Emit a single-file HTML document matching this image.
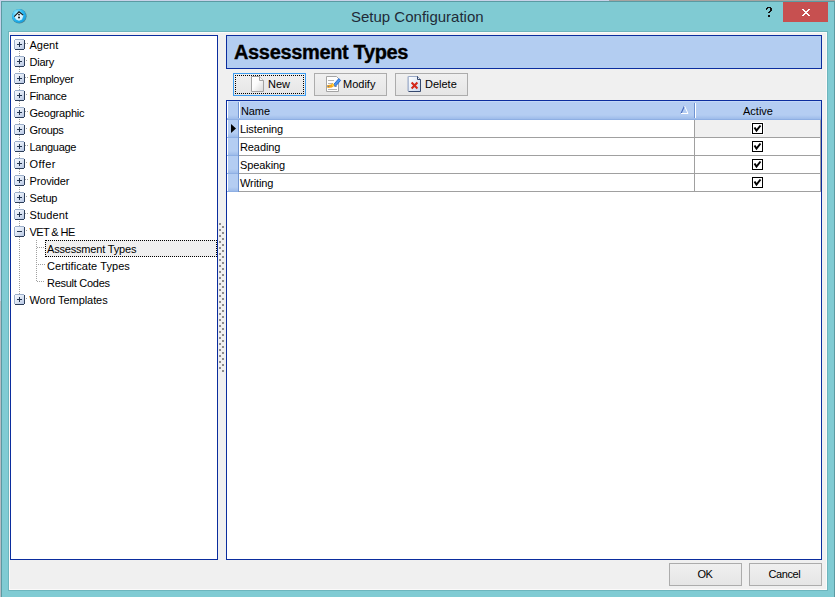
<!DOCTYPE html><html><head><meta charset="utf-8"><style>
*{margin:0;padding:0;box-sizing:border-box}
html,body{width:835px;height:597px;overflow:hidden;position:relative;background:#dde3ec;font-family:"Liberation Sans",sans-serif}
.a{position:absolute}
.t{position:absolute;font-size:11px;line-height:17px;color:#000;white-space:nowrap}
</style></head><body>
<div class="a" style="left:0px;top:0px;width:609px;height:1px;background:#c9d2e8"></div>
<div class="a" style="left:609px;top:0px;width:226px;height:1px;background:#a6a3a0"></div>
<div class="a" style="left:0px;top:0px;width:1px;height:301px;background:#c8d2ea"></div>
<div class="a" style="left:0px;top:301px;width:1px;height:296px;background:#b8bcc4"></div>
<div class="a" style="left:1px;top:1px;width:834px;height:600px;background:#80cbd3;border:1px solid #5b9aa2;border-bottom:none"></div>
<svg class="a" style="left:11px;top:8px" width="17" height="17" viewBox="0 0 17 17">
<defs><radialGradient id="ic" cx="0.35" cy="0.3" r="0.8"><stop offset="0" stop-color="#a0ecff"/><stop offset="0.5" stop-color="#2cbaf2"/><stop offset="1" stop-color="#1298d8"/></radialGradient></defs>
<circle cx="8.3" cy="8.3" r="7.3" fill="#3a4a50" opacity="0.6"/>
<circle cx="8" cy="8" r="7.1" fill="url(#ic)"/>
<path d="M3.4 8.6 L8 4 L12.4 7.6 L11 11.5 L8 12.8 L5 11.5 Z" fill="#fff" opacity="0.8"/>
<path d="M3.2 8.6 L8 3.8 L12.2 7.2" fill="none" stroke="#151515" stroke-width="1.05"/>
<circle cx="8" cy="6.6" r="0.9" fill="#111"/><circle cx="8" cy="9.4" r="1" fill="#111"/>
</svg>
<div class="t" style="left:351px;top:7px;font-size:15px;line-height:20px;color:#1f2b38">Setup Configuration</div>
<svg class="a" style="left:0;top:0" width="835" height="30" shape-rendering="crispEdges"><rect x="767" y="7" width="4" height="1" fill="#111"/><rect x="766" y="8" width="2" height="1" fill="#111"/><rect x="766" y="9" width="1" height="1" fill="#111"/><rect x="770" y="8" width="2" height="3" fill="#111"/><rect x="769" y="11" width="2" height="1" fill="#111"/><rect x="768" y="12" width="2" height="1" fill="#111"/><rect x="768" y="15" width="2" height="2" fill="#111"/></svg>
<div class="a" style="left:783px;top:2px;width:45px;height:20px;background:#c75050"></div>
<svg class="a" style="left:0;top:0" width="835" height="30" shape-rendering="crispEdges"><rect x="802" y="9" width="2" height="1" fill="#fff"/><rect x="808" y="9" width="2" height="1" fill="#fff"/><rect x="803" y="10" width="2" height="1" fill="#fff"/><rect x="807" y="10" width="2" height="1" fill="#fff"/><rect x="804" y="11" width="4" height="1" fill="#fff"/><rect x="805" y="12" width="2" height="1" fill="#fff"/><rect x="804" y="13" width="4" height="1" fill="#fff"/><rect x="803" y="14" width="2" height="1" fill="#fff"/><rect x="807" y="14" width="2" height="1" fill="#fff"/><rect x="802" y="15" width="2" height="1" fill="#fff"/><rect x="808" y="15" width="2" height="1" fill="#fff"/></svg>
<div class="a" style="left:8px;top:31px;width:820px;height:560px;background:#6db5bd"></div>
<div class="a" style="left:9px;top:32px;width:818px;height:558px;background:#f0f0f0;border:1px solid #fbfafa"></div>
<div class="a" style="left:10px;top:35px;width:208px;height:525px;background:#fff;border:1px solid #0b2d9e"></div>
<svg class="a" style="left:0;top:0" width="835" height="597"><rect x="19" y="51" width="1" height="1" fill="#a0a0a0"/><rect x="19" y="53" width="1" height="1" fill="#a0a0a0"/><rect x="19" y="55" width="1" height="1" fill="#a0a0a0"/><rect x="19" y="57" width="1" height="1" fill="#a0a0a0"/><rect x="19" y="59" width="1" height="1" fill="#a0a0a0"/><rect x="19" y="61" width="1" height="1" fill="#a0a0a0"/><rect x="19" y="63" width="1" height="1" fill="#a0a0a0"/><rect x="19" y="65" width="1" height="1" fill="#a0a0a0"/><rect x="19" y="67" width="1" height="1" fill="#a0a0a0"/><rect x="19" y="69" width="1" height="1" fill="#a0a0a0"/><rect x="19" y="71" width="1" height="1" fill="#a0a0a0"/><rect x="19" y="73" width="1" height="1" fill="#a0a0a0"/><rect x="19" y="75" width="1" height="1" fill="#a0a0a0"/><rect x="19" y="77" width="1" height="1" fill="#a0a0a0"/><rect x="19" y="79" width="1" height="1" fill="#a0a0a0"/><rect x="19" y="81" width="1" height="1" fill="#a0a0a0"/><rect x="19" y="83" width="1" height="1" fill="#a0a0a0"/><rect x="19" y="85" width="1" height="1" fill="#a0a0a0"/><rect x="19" y="87" width="1" height="1" fill="#a0a0a0"/><rect x="19" y="89" width="1" height="1" fill="#a0a0a0"/><rect x="19" y="91" width="1" height="1" fill="#a0a0a0"/><rect x="19" y="93" width="1" height="1" fill="#a0a0a0"/><rect x="19" y="95" width="1" height="1" fill="#a0a0a0"/><rect x="19" y="97" width="1" height="1" fill="#a0a0a0"/><rect x="19" y="99" width="1" height="1" fill="#a0a0a0"/><rect x="19" y="101" width="1" height="1" fill="#a0a0a0"/><rect x="19" y="103" width="1" height="1" fill="#a0a0a0"/><rect x="19" y="105" width="1" height="1" fill="#a0a0a0"/><rect x="19" y="107" width="1" height="1" fill="#a0a0a0"/><rect x="19" y="109" width="1" height="1" fill="#a0a0a0"/><rect x="19" y="111" width="1" height="1" fill="#a0a0a0"/><rect x="19" y="113" width="1" height="1" fill="#a0a0a0"/><rect x="19" y="115" width="1" height="1" fill="#a0a0a0"/><rect x="19" y="117" width="1" height="1" fill="#a0a0a0"/><rect x="19" y="119" width="1" height="1" fill="#a0a0a0"/><rect x="19" y="121" width="1" height="1" fill="#a0a0a0"/><rect x="19" y="123" width="1" height="1" fill="#a0a0a0"/><rect x="19" y="125" width="1" height="1" fill="#a0a0a0"/><rect x="19" y="127" width="1" height="1" fill="#a0a0a0"/><rect x="19" y="129" width="1" height="1" fill="#a0a0a0"/><rect x="19" y="131" width="1" height="1" fill="#a0a0a0"/><rect x="19" y="133" width="1" height="1" fill="#a0a0a0"/><rect x="19" y="135" width="1" height="1" fill="#a0a0a0"/><rect x="19" y="137" width="1" height="1" fill="#a0a0a0"/><rect x="19" y="139" width="1" height="1" fill="#a0a0a0"/><rect x="19" y="141" width="1" height="1" fill="#a0a0a0"/><rect x="19" y="143" width="1" height="1" fill="#a0a0a0"/><rect x="19" y="145" width="1" height="1" fill="#a0a0a0"/><rect x="19" y="147" width="1" height="1" fill="#a0a0a0"/><rect x="19" y="149" width="1" height="1" fill="#a0a0a0"/><rect x="19" y="151" width="1" height="1" fill="#a0a0a0"/><rect x="19" y="153" width="1" height="1" fill="#a0a0a0"/><rect x="19" y="155" width="1" height="1" fill="#a0a0a0"/><rect x="19" y="157" width="1" height="1" fill="#a0a0a0"/><rect x="19" y="159" width="1" height="1" fill="#a0a0a0"/><rect x="19" y="161" width="1" height="1" fill="#a0a0a0"/><rect x="19" y="163" width="1" height="1" fill="#a0a0a0"/><rect x="19" y="165" width="1" height="1" fill="#a0a0a0"/><rect x="19" y="167" width="1" height="1" fill="#a0a0a0"/><rect x="19" y="169" width="1" height="1" fill="#a0a0a0"/><rect x="19" y="171" width="1" height="1" fill="#a0a0a0"/><rect x="19" y="173" width="1" height="1" fill="#a0a0a0"/><rect x="19" y="175" width="1" height="1" fill="#a0a0a0"/><rect x="19" y="177" width="1" height="1" fill="#a0a0a0"/><rect x="19" y="179" width="1" height="1" fill="#a0a0a0"/><rect x="19" y="181" width="1" height="1" fill="#a0a0a0"/><rect x="19" y="183" width="1" height="1" fill="#a0a0a0"/><rect x="19" y="185" width="1" height="1" fill="#a0a0a0"/><rect x="19" y="187" width="1" height="1" fill="#a0a0a0"/><rect x="19" y="189" width="1" height="1" fill="#a0a0a0"/><rect x="19" y="191" width="1" height="1" fill="#a0a0a0"/><rect x="19" y="193" width="1" height="1" fill="#a0a0a0"/><rect x="19" y="195" width="1" height="1" fill="#a0a0a0"/><rect x="19" y="197" width="1" height="1" fill="#a0a0a0"/><rect x="19" y="199" width="1" height="1" fill="#a0a0a0"/><rect x="19" y="201" width="1" height="1" fill="#a0a0a0"/><rect x="19" y="203" width="1" height="1" fill="#a0a0a0"/><rect x="19" y="205" width="1" height="1" fill="#a0a0a0"/><rect x="19" y="207" width="1" height="1" fill="#a0a0a0"/><rect x="19" y="209" width="1" height="1" fill="#a0a0a0"/><rect x="19" y="211" width="1" height="1" fill="#a0a0a0"/><rect x="19" y="213" width="1" height="1" fill="#a0a0a0"/><rect x="19" y="215" width="1" height="1" fill="#a0a0a0"/><rect x="19" y="217" width="1" height="1" fill="#a0a0a0"/><rect x="19" y="219" width="1" height="1" fill="#a0a0a0"/><rect x="19" y="221" width="1" height="1" fill="#a0a0a0"/><rect x="19" y="223" width="1" height="1" fill="#a0a0a0"/><rect x="19" y="225" width="1" height="1" fill="#a0a0a0"/><rect x="19" y="227" width="1" height="1" fill="#a0a0a0"/><rect x="19" y="229" width="1" height="1" fill="#a0a0a0"/><rect x="19" y="231" width="1" height="1" fill="#a0a0a0"/><rect x="19" y="233" width="1" height="1" fill="#a0a0a0"/><rect x="19" y="235" width="1" height="1" fill="#a0a0a0"/><rect x="19" y="237" width="1" height="1" fill="#a0a0a0"/><rect x="19" y="239" width="1" height="1" fill="#a0a0a0"/><rect x="19" y="241" width="1" height="1" fill="#a0a0a0"/><rect x="19" y="243" width="1" height="1" fill="#a0a0a0"/><rect x="19" y="245" width="1" height="1" fill="#a0a0a0"/><rect x="19" y="247" width="1" height="1" fill="#a0a0a0"/><rect x="19" y="249" width="1" height="1" fill="#a0a0a0"/><rect x="19" y="251" width="1" height="1" fill="#a0a0a0"/><rect x="19" y="253" width="1" height="1" fill="#a0a0a0"/><rect x="19" y="255" width="1" height="1" fill="#a0a0a0"/><rect x="19" y="257" width="1" height="1" fill="#a0a0a0"/><rect x="19" y="259" width="1" height="1" fill="#a0a0a0"/><rect x="19" y="261" width="1" height="1" fill="#a0a0a0"/><rect x="19" y="263" width="1" height="1" fill="#a0a0a0"/><rect x="19" y="265" width="1" height="1" fill="#a0a0a0"/><rect x="19" y="267" width="1" height="1" fill="#a0a0a0"/><rect x="19" y="269" width="1" height="1" fill="#a0a0a0"/><rect x="19" y="271" width="1" height="1" fill="#a0a0a0"/><rect x="19" y="273" width="1" height="1" fill="#a0a0a0"/><rect x="19" y="275" width="1" height="1" fill="#a0a0a0"/><rect x="19" y="277" width="1" height="1" fill="#a0a0a0"/><rect x="19" y="279" width="1" height="1" fill="#a0a0a0"/><rect x="19" y="281" width="1" height="1" fill="#a0a0a0"/><rect x="19" y="283" width="1" height="1" fill="#a0a0a0"/><rect x="19" y="285" width="1" height="1" fill="#a0a0a0"/><rect x="19" y="287" width="1" height="1" fill="#a0a0a0"/><rect x="19" y="289" width="1" height="1" fill="#a0a0a0"/><rect x="19" y="291" width="1" height="1" fill="#a0a0a0"/><rect x="19" y="293" width="1" height="1" fill="#a0a0a0"/><rect x="36" y="240" width="1" height="1" fill="#a0a0a0"/><rect x="36" y="242" width="1" height="1" fill="#a0a0a0"/><rect x="36" y="244" width="1" height="1" fill="#a0a0a0"/><rect x="36" y="246" width="1" height="1" fill="#a0a0a0"/><rect x="36" y="248" width="1" height="1" fill="#a0a0a0"/><rect x="36" y="250" width="1" height="1" fill="#a0a0a0"/><rect x="36" y="252" width="1" height="1" fill="#a0a0a0"/><rect x="36" y="254" width="1" height="1" fill="#a0a0a0"/><rect x="36" y="256" width="1" height="1" fill="#a0a0a0"/><rect x="36" y="258" width="1" height="1" fill="#a0a0a0"/><rect x="36" y="260" width="1" height="1" fill="#a0a0a0"/><rect x="36" y="262" width="1" height="1" fill="#a0a0a0"/><rect x="36" y="264" width="1" height="1" fill="#a0a0a0"/><rect x="36" y="266" width="1" height="1" fill="#a0a0a0"/><rect x="36" y="268" width="1" height="1" fill="#a0a0a0"/><rect x="36" y="270" width="1" height="1" fill="#a0a0a0"/><rect x="36" y="272" width="1" height="1" fill="#a0a0a0"/><rect x="36" y="274" width="1" height="1" fill="#a0a0a0"/><rect x="36" y="276" width="1" height="1" fill="#a0a0a0"/><rect x="36" y="278" width="1" height="1" fill="#a0a0a0"/><rect x="36" y="280" width="1" height="1" fill="#a0a0a0"/><rect x="25" y="43" width="1" height="1" fill="#a0a0a0"/><rect x="27" y="43" width="1" height="1" fill="#a0a0a0"/><rect x="26" y="60" width="1" height="1" fill="#a0a0a0"/><rect x="25" y="77" width="1" height="1" fill="#a0a0a0"/><rect x="27" y="77" width="1" height="1" fill="#a0a0a0"/><rect x="26" y="94" width="1" height="1" fill="#a0a0a0"/><rect x="25" y="111" width="1" height="1" fill="#a0a0a0"/><rect x="27" y="111" width="1" height="1" fill="#a0a0a0"/><rect x="26" y="128" width="1" height="1" fill="#a0a0a0"/><rect x="25" y="145" width="1" height="1" fill="#a0a0a0"/><rect x="27" y="145" width="1" height="1" fill="#a0a0a0"/><rect x="26" y="162" width="1" height="1" fill="#a0a0a0"/><rect x="25" y="179" width="1" height="1" fill="#a0a0a0"/><rect x="27" y="179" width="1" height="1" fill="#a0a0a0"/><rect x="26" y="196" width="1" height="1" fill="#a0a0a0"/><rect x="25" y="213" width="1" height="1" fill="#a0a0a0"/><rect x="27" y="213" width="1" height="1" fill="#a0a0a0"/><rect x="26" y="230" width="1" height="1" fill="#a0a0a0"/><rect x="37" y="247" width="1" height="1" fill="#a0a0a0"/><rect x="39" y="247" width="1" height="1" fill="#a0a0a0"/><rect x="41" y="247" width="1" height="1" fill="#a0a0a0"/><rect x="43" y="247" width="1" height="1" fill="#a0a0a0"/><rect x="38" y="264" width="1" height="1" fill="#a0a0a0"/><rect x="40" y="264" width="1" height="1" fill="#a0a0a0"/><rect x="42" y="264" width="1" height="1" fill="#a0a0a0"/><rect x="44" y="264" width="1" height="1" fill="#a0a0a0"/><rect x="37" y="281" width="1" height="1" fill="#a0a0a0"/><rect x="39" y="281" width="1" height="1" fill="#a0a0a0"/><rect x="41" y="281" width="1" height="1" fill="#a0a0a0"/><rect x="43" y="281" width="1" height="1" fill="#a0a0a0"/><rect x="26" y="298" width="1" height="1" fill="#a0a0a0"/></svg>
<svg class="a" style="left:0;top:0" width="835" height="597"><defs><linearGradient id="pb" x1="0" y1="0" x2="1" y2="1"><stop offset="0" stop-color="#f8fafe"/><stop offset="0.5" stop-color="#dde6f4"/><stop offset="1" stop-color="#b4c4e2"/></linearGradient></defs>
<rect x="15" y="40" width="9" height="9" fill="url(#pb)"/><rect x="15" y="39" width="9" height="1" fill="#9db0cc"/><rect x="14" y="40" width="1" height="9" fill="#9db0cc"/><rect x="24" y="40" width="1" height="9" fill="#2c3e5a"/><rect x="15" y="49" width="9" height="1" fill="#2c3e5a"/><rect x="17" y="44" width="5" height="1" fill="#22344f"/><rect x="19" y="42" width="1" height="5" fill="#22344f"/><rect x="15" y="57" width="9" height="9" fill="url(#pb)"/><rect x="15" y="56" width="9" height="1" fill="#9db0cc"/><rect x="14" y="57" width="1" height="9" fill="#9db0cc"/><rect x="24" y="57" width="1" height="9" fill="#2c3e5a"/><rect x="15" y="66" width="9" height="1" fill="#2c3e5a"/><rect x="17" y="61" width="5" height="1" fill="#22344f"/><rect x="19" y="59" width="1" height="5" fill="#22344f"/><rect x="15" y="74" width="9" height="9" fill="url(#pb)"/><rect x="15" y="73" width="9" height="1" fill="#9db0cc"/><rect x="14" y="74" width="1" height="9" fill="#9db0cc"/><rect x="24" y="74" width="1" height="9" fill="#2c3e5a"/><rect x="15" y="83" width="9" height="1" fill="#2c3e5a"/><rect x="17" y="78" width="5" height="1" fill="#22344f"/><rect x="19" y="76" width="1" height="5" fill="#22344f"/><rect x="15" y="91" width="9" height="9" fill="url(#pb)"/><rect x="15" y="90" width="9" height="1" fill="#9db0cc"/><rect x="14" y="91" width="1" height="9" fill="#9db0cc"/><rect x="24" y="91" width="1" height="9" fill="#2c3e5a"/><rect x="15" y="100" width="9" height="1" fill="#2c3e5a"/><rect x="17" y="95" width="5" height="1" fill="#22344f"/><rect x="19" y="93" width="1" height="5" fill="#22344f"/><rect x="15" y="108" width="9" height="9" fill="url(#pb)"/><rect x="15" y="107" width="9" height="1" fill="#9db0cc"/><rect x="14" y="108" width="1" height="9" fill="#9db0cc"/><rect x="24" y="108" width="1" height="9" fill="#2c3e5a"/><rect x="15" y="117" width="9" height="1" fill="#2c3e5a"/><rect x="17" y="112" width="5" height="1" fill="#22344f"/><rect x="19" y="110" width="1" height="5" fill="#22344f"/><rect x="15" y="125" width="9" height="9" fill="url(#pb)"/><rect x="15" y="124" width="9" height="1" fill="#9db0cc"/><rect x="14" y="125" width="1" height="9" fill="#9db0cc"/><rect x="24" y="125" width="1" height="9" fill="#2c3e5a"/><rect x="15" y="134" width="9" height="1" fill="#2c3e5a"/><rect x="17" y="129" width="5" height="1" fill="#22344f"/><rect x="19" y="127" width="1" height="5" fill="#22344f"/><rect x="15" y="142" width="9" height="9" fill="url(#pb)"/><rect x="15" y="141" width="9" height="1" fill="#9db0cc"/><rect x="14" y="142" width="1" height="9" fill="#9db0cc"/><rect x="24" y="142" width="1" height="9" fill="#2c3e5a"/><rect x="15" y="151" width="9" height="1" fill="#2c3e5a"/><rect x="17" y="146" width="5" height="1" fill="#22344f"/><rect x="19" y="144" width="1" height="5" fill="#22344f"/><rect x="15" y="159" width="9" height="9" fill="url(#pb)"/><rect x="15" y="158" width="9" height="1" fill="#9db0cc"/><rect x="14" y="159" width="1" height="9" fill="#9db0cc"/><rect x="24" y="159" width="1" height="9" fill="#2c3e5a"/><rect x="15" y="168" width="9" height="1" fill="#2c3e5a"/><rect x="17" y="163" width="5" height="1" fill="#22344f"/><rect x="19" y="161" width="1" height="5" fill="#22344f"/><rect x="15" y="176" width="9" height="9" fill="url(#pb)"/><rect x="15" y="175" width="9" height="1" fill="#9db0cc"/><rect x="14" y="176" width="1" height="9" fill="#9db0cc"/><rect x="24" y="176" width="1" height="9" fill="#2c3e5a"/><rect x="15" y="185" width="9" height="1" fill="#2c3e5a"/><rect x="17" y="180" width="5" height="1" fill="#22344f"/><rect x="19" y="178" width="1" height="5" fill="#22344f"/><rect x="15" y="193" width="9" height="9" fill="url(#pb)"/><rect x="15" y="192" width="9" height="1" fill="#9db0cc"/><rect x="14" y="193" width="1" height="9" fill="#9db0cc"/><rect x="24" y="193" width="1" height="9" fill="#2c3e5a"/><rect x="15" y="202" width="9" height="1" fill="#2c3e5a"/><rect x="17" y="197" width="5" height="1" fill="#22344f"/><rect x="19" y="195" width="1" height="5" fill="#22344f"/><rect x="15" y="210" width="9" height="9" fill="url(#pb)"/><rect x="15" y="209" width="9" height="1" fill="#9db0cc"/><rect x="14" y="210" width="1" height="9" fill="#9db0cc"/><rect x="24" y="210" width="1" height="9" fill="#2c3e5a"/><rect x="15" y="219" width="9" height="1" fill="#2c3e5a"/><rect x="17" y="214" width="5" height="1" fill="#22344f"/><rect x="19" y="212" width="1" height="5" fill="#22344f"/><rect x="15" y="227" width="9" height="9" fill="url(#pb)"/><rect x="15" y="226" width="9" height="1" fill="#9db0cc"/><rect x="14" y="227" width="1" height="9" fill="#9db0cc"/><rect x="24" y="227" width="1" height="9" fill="#2c3e5a"/><rect x="15" y="236" width="9" height="1" fill="#2c3e5a"/><rect x="17" y="231" width="5" height="1" fill="#22344f"/><rect x="15" y="295" width="9" height="9" fill="url(#pb)"/><rect x="15" y="294" width="9" height="1" fill="#9db0cc"/><rect x="14" y="295" width="1" height="9" fill="#9db0cc"/><rect x="24" y="295" width="1" height="9" fill="#2c3e5a"/><rect x="15" y="304" width="9" height="1" fill="#2c3e5a"/><rect x="17" y="299" width="5" height="1" fill="#22344f"/><rect x="19" y="297" width="1" height="5" fill="#22344f"/></svg>
<div class="a" style="left:45px;top:240px;width:172px;height:17px;background:#efefef;border:1px dotted #000"></div>
<div class="t" style="left:29.5px;top:37px;letter-spacing:0px">Agent</div>
<div class="t" style="left:29.5px;top:54px;letter-spacing:-0.25px">Diary</div>
<div class="t" style="left:29.5px;top:71px;letter-spacing:-0.3px">Employer</div>
<div class="t" style="left:29.5px;top:88px;letter-spacing:-0.3px">Finance</div>
<div class="t" style="left:29.5px;top:105px;letter-spacing:-0.2px">Geographic</div>
<div class="t" style="left:29.5px;top:122px;letter-spacing:-0.35px">Groups</div>
<div class="t" style="left:29.5px;top:139px;letter-spacing:-0.28px">Language</div>
<div class="t" style="left:29.5px;top:156px;letter-spacing:0.4px">Offer</div>
<div class="t" style="left:29.5px;top:173px;letter-spacing:-0.15px">Provider</div>
<div class="t" style="left:29.5px;top:190px;letter-spacing:-0.2px">Setup</div>
<div class="t" style="left:29.5px;top:207px;letter-spacing:0.1px">Student</div>
<div class="t" style="left:29.5px;top:224px;letter-spacing:-0.6px">VET &amp; HE</div>
<div class="t" style="left:47px;top:241px;letter-spacing:-0.18px">Assessment Types</div>
<div class="t" style="left:47px;top:258px;letter-spacing:0.07px">Certificate Types</div>
<div class="t" style="left:47px;top:275px;letter-spacing:-0.27px">Result Codes</div>
<div class="t" style="left:29.5px;top:292px;letter-spacing:-0.07px">Word Templates</div>
<svg class="a" style="left:0;top:0" width="835" height="597"><rect x="219" y="223" width="2" height="2" fill="#8c8c8c"/><rect x="222" y="226" width="2" height="2" fill="#8c8c8c"/><rect x="219" y="229" width="2" height="2" fill="#8c8c8c"/><rect x="222" y="232" width="2" height="2" fill="#8c8c8c"/><rect x="219" y="235" width="2" height="2" fill="#8c8c8c"/><rect x="222" y="238" width="2" height="2" fill="#8c8c8c"/><rect x="219" y="241" width="2" height="2" fill="#8c8c8c"/><rect x="222" y="244" width="2" height="2" fill="#8c8c8c"/><rect x="219" y="247" width="2" height="2" fill="#8c8c8c"/><rect x="222" y="250" width="2" height="2" fill="#8c8c8c"/><rect x="219" y="253" width="2" height="2" fill="#8c8c8c"/><rect x="222" y="256" width="2" height="2" fill="#8c8c8c"/><rect x="219" y="259" width="2" height="2" fill="#8c8c8c"/><rect x="222" y="262" width="2" height="2" fill="#8c8c8c"/><rect x="219" y="265" width="2" height="2" fill="#8c8c8c"/><rect x="222" y="268" width="2" height="2" fill="#8c8c8c"/><rect x="219" y="271" width="2" height="2" fill="#8c8c8c"/><rect x="222" y="274" width="2" height="2" fill="#8c8c8c"/><rect x="219" y="277" width="2" height="2" fill="#8c8c8c"/><rect x="222" y="280" width="2" height="2" fill="#8c8c8c"/><rect x="219" y="283" width="2" height="2" fill="#8c8c8c"/><rect x="222" y="286" width="2" height="2" fill="#8c8c8c"/><rect x="219" y="289" width="2" height="2" fill="#8c8c8c"/><rect x="222" y="292" width="2" height="2" fill="#8c8c8c"/><rect x="219" y="295" width="2" height="2" fill="#8c8c8c"/><rect x="222" y="298" width="2" height="2" fill="#8c8c8c"/><rect x="219" y="301" width="2" height="2" fill="#8c8c8c"/><rect x="222" y="304" width="2" height="2" fill="#8c8c8c"/><rect x="219" y="307" width="2" height="2" fill="#8c8c8c"/><rect x="222" y="310" width="2" height="2" fill="#8c8c8c"/><rect x="219" y="313" width="2" height="2" fill="#8c8c8c"/><rect x="222" y="316" width="2" height="2" fill="#8c8c8c"/><rect x="219" y="319" width="2" height="2" fill="#8c8c8c"/><rect x="222" y="322" width="2" height="2" fill="#8c8c8c"/><rect x="219" y="325" width="2" height="2" fill="#8c8c8c"/><rect x="222" y="328" width="2" height="2" fill="#8c8c8c"/><rect x="219" y="331" width="2" height="2" fill="#8c8c8c"/><rect x="222" y="334" width="2" height="2" fill="#8c8c8c"/><rect x="219" y="337" width="2" height="2" fill="#8c8c8c"/><rect x="222" y="340" width="2" height="2" fill="#8c8c8c"/><rect x="219" y="343" width="2" height="2" fill="#8c8c8c"/><rect x="222" y="346" width="2" height="2" fill="#8c8c8c"/><rect x="219" y="349" width="2" height="2" fill="#8c8c8c"/><rect x="222" y="352" width="2" height="2" fill="#8c8c8c"/><rect x="219" y="355" width="2" height="2" fill="#8c8c8c"/><rect x="222" y="358" width="2" height="2" fill="#8c8c8c"/><rect x="219" y="361" width="2" height="2" fill="#8c8c8c"/><rect x="222" y="364" width="2" height="2" fill="#8c8c8c"/><rect x="219" y="367" width="2" height="2" fill="#8c8c8c"/><rect x="222" y="370" width="2" height="2" fill="#8c8c8c"/></svg>
<div class="a" style="left:226px;top:35px;width:596px;height:34px;background:#b3cdf1;border:1px solid #0b2d9e"></div>
<div class="t" style="left:234px;top:39px;font-size:20px;font-weight:bold;line-height:26px;color:#000;letter-spacing:-0.35px;-webkit-text-stroke:0.35px #000">Assessment Types</div>
<div class="a" style="left:233px;top:73px;width:73px;height:23px;background:linear-gradient(#f0f0f0,#e5e5e5);border:1px solid #3c9cf0"></div>
<div class="a" style="left:235px;top:75px;width:69px;height:19px;border:1px dotted #000"></div>
<svg class="a" style="left:0;top:0" width="835" height="597"><defs><linearGradient id="pg" x1="0" y1="0" x2="1" y2="1"><stop offset="0" stop-color="#ffffff"/><stop offset="0.45" stop-color="#fbfbfb"/><stop offset="1" stop-color="#d8d8d8"/></linearGradient></defs><path d="M251.5 76.5 H259.5 L263.5 80.5 V91.5 H251.5 Z" fill="url(#pg)" stroke="#a2a2a2"/><path d="M259.5 76.5 V80.5 H263.5" fill="#f4f4f4" stroke="#a2a2a2"/></svg>
<div class="t" style="left:268px;top:76px;">New</div>
<div class="a" style="left:314px;top:73px;width:73px;height:23px;background:linear-gradient(#f0f0f0,#e5e5e5);border:1px solid #acacac"></div>
<svg class="a" style="left:0;top:0" width="835" height="597"><defs><linearGradient id="bl" x1="0" y1="0" x2="1" y2="0"><stop offset="0" stop-color="#1d5fd0"/><stop offset="0.5" stop-color="#6fb0f5"/><stop offset="1" stop-color="#1a58c8"/></linearGradient></defs><path d="M326.5 76.5 H336.5 L338.5 78.5 V91.5 H326.5 Z" fill="#fdfdfd" stroke="#a4a4a4"/><path d="M328 80.5 H334 M328 83.5 H333 M334 86.5 H337 M328 89.5 H337" stroke="#b4b4b4"/><path d="M333.6 84.6 L338.8 78.6 L340.6 80.4 L335.4 86.4 Z" fill="#4a96ee" stroke="#1658c8" stroke-width="0.8"/><path d="M327 85.2 L331 84.6 L332.8 83 L334.6 85.6 L332 87.6 L327.5 88 Z" fill="#f6a416"/><path d="M331.5 84.5 L332.8 83.4 L334.2 85.4 L332.6 86.4 Z" fill="#ffd040"/><rect x="327.6" y="85.8" width="1.6" height="1" fill="#5070a8"/></svg>
<div class="t" style="left:343px;top:76px;">Modify</div>
<div class="a" style="left:395px;top:73px;width:73px;height:23px;background:linear-gradient(#f0f0f0,#e5e5e5);border:1px solid #acacac"></div>
<svg class="a" style="left:0;top:0" width="835" height="597"><defs><linearGradient id="dg" x1="0" y1="0" x2="1" y2="1"><stop offset="0" stop-color="#ffffff"/><stop offset="1" stop-color="#c8d8f0"/></linearGradient></defs><path d="M408.5 91.5 V76.5 H417.5" fill="none" stroke="#98a8c6"/><path d="M408.5 76.5 H417.5 L420.5 79.5 V91.5 H408.5 Z" fill="url(#dg)"/><path d="M408.5 76.5 H417.5" stroke="#98a8c6"/><path d="M408 76.5 V91" stroke="#98a8c6"/><path d="M417.5 76.5 L420.5 79.5 V91.5 H408.5" fill="none" stroke="#36496e"/><path d="M417.5 76.5 V79.5 H420.5" fill="#e8eef8" stroke="#36496e"/><path d="M411.6 82.6 L417.4 88.4 M417.4 82.6 L411.6 88.4" stroke="#d42a1e" stroke-width="2.1"/></svg>
<div class="t" style="left:425px;top:76px;">Delete</div>
<div class="a" style="left:226px;top:100px;width:596px;height:460px;background:#fff;border:1px solid #0b2d9e"></div>
<div class="a" style="left:227px;top:101px;width:594px;height:19px;background:linear-gradient(#b4cdf2 0px,#b4cdf2 14px,#9dbbea 18px,#7fa3dc 19px)"></div>
<div class="a" style="left:227px;top:101px;width:594px;height:1px;background:#c2d7f6"></div>
<div class="a" style="left:227px;top:101px;width:1px;height:17px;background:#fff"></div>
<div class="a" style="left:238px;top:102px;width:1px;height:16px;background:#6f94d2"></div>
<div class="a" style="left:239px;top:102px;width:1px;height:16px;background:#fff"></div>
<div class="a" style="left:694px;top:103px;width:1px;height:15px;background:#6f94d2"></div>
<div class="a" style="left:695px;top:103px;width:1px;height:15px;background:#fff"></div>
<div class="t" style="left:241px;top:103px;letter-spacing:-0.1px">Name</div>
<div class="t" style="left:743px;top:103px;">Active</div>
<svg class="a" style="left:680px;top:105px" width="10" height="10" viewBox="0 0 10 10"><path d="M4.5 1 L1 8.5" stroke="#4468bc" stroke-width="1.1"/><path d="M4.5 1 L8 8.5 H1" fill="none" stroke="#fff" stroke-width="1"/></svg>
<div class="a" style="left:227px;top:120px;width:11px;height:18px;background:linear-gradient(#b4cdf2 0px,#b4cdf2 13px,#9dbbea 17px,#7fa3dc 18px)"></div>
<div class="a" style="left:227px;top:120px;width:1px;height:17px;background:#fff"></div>
<div class="a" style="left:238px;top:120px;width:1px;height:18px;background:#6f94d2"></div>
<div class="a" style="left:239px;top:137px;width:582px;height:1px;background:#a0a0a0"></div>
<div class="a" style="left:694px;top:120px;width:1px;height:17px;background:#a0a0a0"></div>
<div class="a" style="left:695px;top:120px;width:126px;height:17px;background:#f0f0f0"></div>
<div class="t" style="left:240px;top:121px;letter-spacing:-0.1px">Listening</div>
<svg class="a" style="left:751px;top:122px" width="13" height="13" viewBox="0 0 13 13"><rect x="0" y="0" width="13" height="13" fill="#fff"/><rect x="1.5" y="1.5" width="10" height="10" fill="#fff" stroke="#000"/><path d="M3.5 5.5 L5.5 8.5 L9.5 3.5" fill="none" stroke="#000" stroke-width="2"/></svg>
<div class="a" style="left:227px;top:138px;width:11px;height:18px;background:linear-gradient(#b4cdf2 0px,#b4cdf2 13px,#9dbbea 17px,#7fa3dc 18px)"></div>
<div class="a" style="left:227px;top:138px;width:1px;height:17px;background:#fff"></div>
<div class="a" style="left:238px;top:138px;width:1px;height:18px;background:#6f94d2"></div>
<div class="a" style="left:239px;top:155px;width:582px;height:1px;background:#a0a0a0"></div>
<div class="a" style="left:694px;top:138px;width:1px;height:17px;background:#a0a0a0"></div>
<div class="t" style="left:240px;top:139px;letter-spacing:-0.1px">Reading</div>
<svg class="a" style="left:751px;top:140px" width="13" height="13" viewBox="0 0 13 13"><rect x="0" y="0" width="13" height="13" fill="#fff"/><rect x="1.5" y="1.5" width="10" height="10" fill="#fff" stroke="#000"/><path d="M3.5 5.5 L5.5 8.5 L9.5 3.5" fill="none" stroke="#000" stroke-width="2"/></svg>
<div class="a" style="left:227px;top:156px;width:11px;height:18px;background:linear-gradient(#b4cdf2 0px,#b4cdf2 13px,#9dbbea 17px,#7fa3dc 18px)"></div>
<div class="a" style="left:227px;top:156px;width:1px;height:17px;background:#fff"></div>
<div class="a" style="left:238px;top:156px;width:1px;height:18px;background:#6f94d2"></div>
<div class="a" style="left:239px;top:173px;width:582px;height:1px;background:#a0a0a0"></div>
<div class="a" style="left:694px;top:156px;width:1px;height:17px;background:#a0a0a0"></div>
<div class="t" style="left:240px;top:157px;letter-spacing:-0.1px">Speaking</div>
<svg class="a" style="left:751px;top:158px" width="13" height="13" viewBox="0 0 13 13"><rect x="0" y="0" width="13" height="13" fill="#fff"/><rect x="1.5" y="1.5" width="10" height="10" fill="#fff" stroke="#000"/><path d="M3.5 5.5 L5.5 8.5 L9.5 3.5" fill="none" stroke="#000" stroke-width="2"/></svg>
<div class="a" style="left:227px;top:174px;width:11px;height:18px;background:linear-gradient(#b4cdf2 0px,#b4cdf2 13px,#9dbbea 17px,#7fa3dc 18px)"></div>
<div class="a" style="left:227px;top:174px;width:1px;height:17px;background:#fff"></div>
<div class="a" style="left:238px;top:174px;width:1px;height:18px;background:#6f94d2"></div>
<div class="a" style="left:239px;top:191px;width:582px;height:1px;background:#a0a0a0"></div>
<div class="a" style="left:694px;top:174px;width:1px;height:17px;background:#a0a0a0"></div>
<div class="t" style="left:240px;top:175px;letter-spacing:-0.1px">Writing</div>
<svg class="a" style="left:751px;top:176px" width="13" height="13" viewBox="0 0 13 13"><rect x="0" y="0" width="13" height="13" fill="#fff"/><rect x="1.5" y="1.5" width="10" height="10" fill="#fff" stroke="#000"/><path d="M3.5 5.5 L5.5 8.5 L9.5 3.5" fill="none" stroke="#000" stroke-width="2"/></svg>
<div class="a" style="left:820px;top:120px;width:1px;height:71px;background:#a0a0a0"></div>
<svg class="a" style="left:231px;top:124px" width="6" height="10" viewBox="0 0 6 10"><path d="M0 0 L5 4.5 L0 9 Z" fill="#000"/></svg>
<div class="a" style="left:669px;top:563px;width:73px;height:23px;background:linear-gradient(#f0f0f0,#e5e5e5);border:1px solid #acacac"></div>
<div class="t" style="left:697.5px;top:566px;letter-spacing:-0.5px">OK</div>
<div class="a" style="left:749px;top:563px;width:73px;height:23px;background:linear-gradient(#f0f0f0,#e5e5e5);border:1px solid #acacac"></div>
<div class="t" style="left:768.5px;top:566px;letter-spacing:-0.4px">Cancel</div>
</body></html>
